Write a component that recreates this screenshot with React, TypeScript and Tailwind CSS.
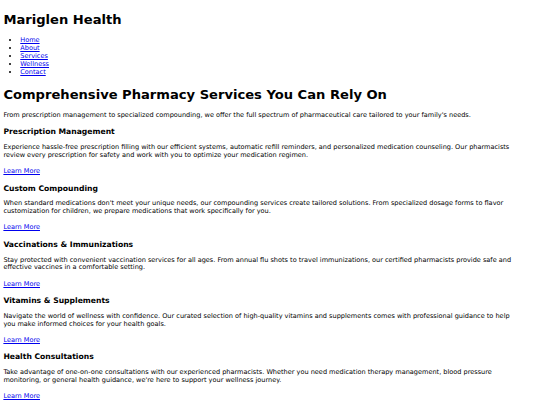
import React from "react";

const services = [
  {
    title: "Prescription Management",
    text: "Experience hassle-free prescription filling with our efficient systems, automatic refill reminders, and personalized medication counseling. Our pharmacists review every prescription for safety and work with you to optimize your medication regimen.",
  },
  {
    title: "Custom Compounding",
    text: "When standard medications don't meet your unique needs, our compounding services create tailored solutions. From specialized dosage forms to flavor customization for children, we prepare medications that work specifically for you.",
  },
  {
    title: "Vaccinations & Immunizations",
    text: "Stay protected with convenient vaccination services for all ages. From annual flu shots to travel immunizations, our certified pharmacists provide safe and effective vaccines in a comfortable setting.",
  },
  {
    title: "Vitamins & Supplements",
    text: "Navigate the world of wellness with confidence. Our curated selection of high-quality vitamins and supplements comes with professional guidance to help you make informed choices for your health goals.",
  },
  {
    title: "Health Consultations",
    text: "Take advantage of one-on-one consultations with our experienced pharmacists. Whether you need medication therapy management, blood pressure monitoring, or general health guidance, we're here to support your wellness journey.",
  },
];

const navItems = ["Home", "About", "Services", "Wellness", "Contact"];

export default function App() {
  return (
    <div className="min-h-[405px] bg-white p-[3.375px] font-['DejaVu_Sans',sans-serif] text-[6.55px] leading-[7.9px] text-black">
      <header>
        <h1 className="my-[9.05px] text-[13.1px] font-bold leading-[15.7px]">Mariglen Health</h1>
        <nav>
          <ul className="my-[6.75px] list-disc pl-[16.875px]">
            {navItems.map((item) => (
              <li key={item}>
                <a href="#" className="text-[#0000ee] underline">
                  {item}
                </a>
              </li>
            ))}
          </ul>
        </nav>
      </header>
      <main>
        <section>
          <h1 className="mt-[10.5px] mb-[9.05px] text-[13.1px] font-bold leading-[15.7px]">
            Comprehensive Pharmacy Services You Can Rely On
          </h1>
          <p className="my-[6.75px] max-w-[514px]">
            From prescription management to specialized compounding, we offer the full spectrum of pharmaceutical care tailored to your family's needs.
          </p>
          {services.map((s) => (
            <div key={s.title}>
              <h3 className="my-[7.5px] text-[7.65px] font-bold leading-[9.2px]">{s.title}</h3>
              <p className="mt-[6.75px] mb-[8.3px] max-w-[514px]">{s.text}</p>
              <a href="#" className="text-[#0000ee] underline">
                Learn More
              </a>
            </div>
          ))}
        </section>
      </main>
    </div>
  );
}
